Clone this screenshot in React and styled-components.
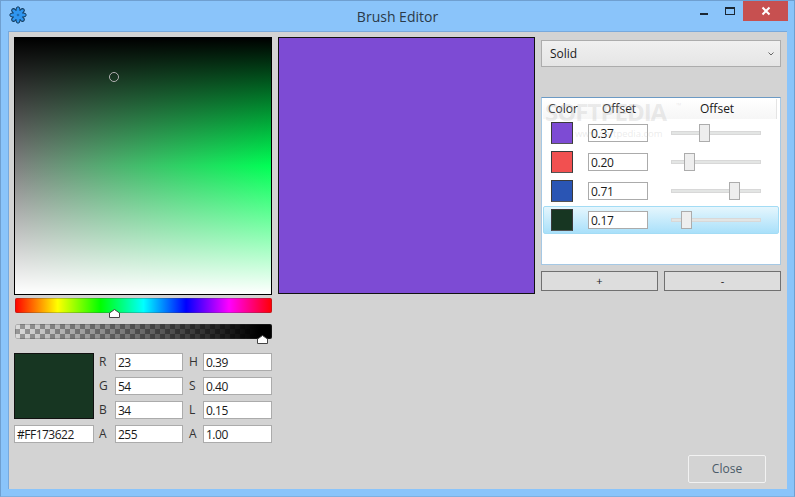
import { Fragment } from 'react';
import styled, { createGlobalStyle } from 'styled-components';

const Global = createGlobalStyle`
  html, body {
    margin: 0;
    padding: 0;
    background: #8ac4fa;
  }
  * {
    box-sizing: border-box;
  }
`;

const Frame = styled.div`
  width: 795px;
  height: 497px;
  display: flex;
  flex-direction: column;
  background: #8ac4fa;
  border: 1px solid #6f9fd0;
  border-bottom-color: #7fb0e0;
  font-family: 'Open Sans', 'Noto Sans', sans-serif;
  font-size: 12px;
  color: #1a1a1a;
  overflow: hidden;
`;

const TitleBar = styled.div`
  height: 30px;
  flex: none;
  position: relative;
  display: flex;
  align-items: flex-start;
  justify-content: space-between;
  padding-left: 8px;
`;

const AppIcon = styled.svg`
  width: 18px;
  height: 18px;
  margin-top: 5px;
`;

const Title = styled.div`
  position: absolute;
  left: 0;
  right: 0;
  top: 6px;
  text-align: center;
  font-size: 14px;
  line-height: 19px;
  color: #2b3a48;
`;

const WinButtons = styled.div`
  display: flex;
  align-items: flex-start;
  margin-right: 6px;
`;

const WinBtn = styled.div`
  width: ${(p) => (p.$close ? '45px' : '26px')};
  height: 20px;
  display: flex;
  align-items: center;
  justify-content: center;
  background: ${(p) => (p.$close ? '#c75050' : 'transparent')};
`;

const Client = styled.div`
  width: 779px;
  height: 458px;
  margin-left: 7px;
  flex: none;
  background: #d3d3d3;
  border-top: 1px solid #78a9dc;
  border-left: 1px solid #78a9dc;
  padding: 5px 6px 0 5px;
  position: relative;
  display: flex;
  gap: 6px;
`;

const LeftCol = styled.div`
  width: 258px;
  display: flex;
  flex-direction: column;
`;

const SvBox = styled.div`
  width: 258px;
  height: 258px;
  border: 1px solid #000;
  position: relative;
  background:
    linear-gradient(to bottom, #000 0%, rgba(0, 0, 0, 0) 50%, rgba(255, 255, 255, 0) 50%, #fff 100%),
    linear-gradient(to right, #808080, #00ff55);
`;

const SvCursor = styled.div`
  position: absolute;
  left: 94px;
  top: 34px;
  width: 10px;
  height: 10px;
  border-radius: 50%;
  border: 1px solid #b4b4b4;
  box-shadow: inset 0 0 0 0.5px rgba(0, 0, 0, 0.4);
`;

const SliderTrack = styled.div`
  width: 257px;
  height: 15px;
  margin-left: 1px;
  margin-top: ${(p) => p.$mt}px;
  position: relative;
  border-radius: 2px;
  background: ${(p) => p.$bg};
  box-shadow: inset 0 0 0 1px rgba(70, 70, 70, 0.3);
`;

const Thumb = styled.svg`
  position: absolute;
  left: ${(p) => p.$x}px;
  top: 11px;
  width: 11px;
  height: 9px;
`;

const ColorRow = styled.div`
  display: flex;
  margin-top: 14px;
`;

const BigSwatch = styled.div`
  width: 80px;
  height: 66px;
  background: #173622;
  border: 1px solid #111;
`;

const HexInput = styled.div`
  width: 80px;
  height: 18px;
  margin-top: 6px;
  background: #fff;
  border: 1px solid #ababab;
  padding-left: 2px;
  line-height: 17px;
  font-size: 12px;
  letter-spacing: -0.5px;
`;

const ValueGrid = styled.div`
  display: grid;
  grid-template-columns: 21px 68px 20px 69px;
  grid-auto-rows: 18px;
  row-gap: 6px;
`;

const ValueLabel = styled.div`
  padding-left: 5px;
  line-height: 17px;
  color: #333;
  font-size: 12px;
  ${(p) => p.$second && 'padding-left: 6px;'}
`;

const ValueInput = styled.div`
  background: #fff;
  border: 1px solid #ababab;
  padding-left: 2px;
  line-height: 17px;
  font-size: 12px;
  letter-spacing: -0.5px;
`;

const Preview = styled.div`
  width: 257px;
  height: 257px;
  background: #7d4bd4;
  border: 1px solid #111;
`;

const RightCol = styled.div`
  width: 240px;
  display: flex;
  flex-direction: column;
`;

const Combo = styled.div`
  height: 27px;
  margin-top: 3px;
  background: linear-gradient(to bottom, #f0f0f0, #e5e5e5);
  border: 1px solid #acacac;
  display: flex;
  align-items: center;
  justify-content: space-between;
  padding: 0 6px 0 8px;
  font-size: 12px;
`;

const ListPanel = styled.div`
  height: 168px;
  margin-top: 30px;
  background: #fff;
  border: 1px solid #a5c8e4;
  border-top-color: #6c9ac4;
  position: relative;
  padding: 1px;
  overflow: hidden;
`;

const ListHeader = styled.div`
  height: 20px;
  display: grid;
  grid-template-columns: 54px 98px 1fr;
  background: linear-gradient(to bottom, #fff, #f6f6f6);
  border-right: 1px solid #e4e4e4;
  margin-right: 2px;
  line-height: 20px;
  font-size: 12px;
`;

const HeaderCell = styled.div`
  padding-left: ${(p) => p.$pl}px;
`;

const Rows = styled.div`
  display: flex;
  flex-direction: column;
  gap: 1px;
`;

const Row = styled.div`
  height: 28px;
  display: flex;
  align-items: center;
  padding-left: 7px;
  border: 1px solid ${(p) => (p.$selected ? '#a3dcf5' : 'transparent')};
  border-radius: 2px;
  background: ${(p) => (p.$selected ? 'linear-gradient(to bottom, #e5f6fd, #a9e0fa)' : 'transparent')};
`;

const RowSwatch = styled.div`
  width: 22px;
  height: 22px;
  flex: none;
  background: ${(p) => p.$color};
  border: 1px solid #3a3a3a;
  border-bottom-color: #555;
`;

const OffsetInput = styled.div`
  width: 60px;
  height: 18px;
  flex: none;
  margin-left: 15px;
  background: #fff;
  border: 1px solid #ababab;
  padding-left: 2px;
  line-height: 17px;
  font-size: 12px;
  letter-spacing: -0.3px;
`;

const RowSlider = styled.div`
  width: 90px;
  height: 4px;
  flex: none;
  margin-left: 23px;
  background: #e3e5e4;
  border: 1px solid #d8d8d8;
  position: relative;
`;

const RowThumb = styled.div`
  position: absolute;
  top: -8px;
  width: 11px;
  height: 18px;
  background: #eeeeee;
  border: 1px solid #acacac;
`;

const ButtonRow = styled.div`
  display: flex;
  gap: 6px;
  margin-top: 6px;
`;

const SmallButton = styled.div`
  flex: 1;
  height: 20px;
  background: #dddddd;
  border: 1px solid #707070;
  text-align: center;
  line-height: 18px;
  font-size: 11px;
`;

const CloseButton = styled.div`
  position: absolute;
  right: 21px;
  bottom: 6px;
  width: 78px;
  height: 28px;
  border: 1px solid #f2f2f2;
  border-radius: 2px;
  text-align: center;
  line-height: 26px;
  font-size: 12px;
  color: #4a5a68;
`;

const Mark = styled.div`
  position: absolute;
  left: ${(p) => p.$x}px;
  top: ${(p) => p.$y}px;
  font-size: ${(p) => p.$size}px;
  font-weight: ${(p) => p.$weight};
  letter-spacing: ${(p) => p.$spacing || 0}px;
  line-height: 1;
  color: rgba(190, 190, 190, 0.3);
  pointer-events: none;
  white-space: nowrap;
`;

const stops = [
  { color: '#7d4bd4', value: '0.37', pos: 27 },
  { color: '#f25050', value: '0.20', pos: 12 },
  { color: '#2a55b4', value: '0.71', pos: 57 },
  { color: '#173622', value: '0.17', pos: 9, selected: true },
];

const hue =
  'linear-gradient(to right, #f00 0%, #ff0 16.6%, #0f0 33.3%, #0ff 50%, #00f 66.6%, #f0f 83.3%, #f00 100%)';
const checker =
  'linear-gradient(to right, rgba(0,0,0,0), #000 95%), repeating-conic-gradient(#989898 0% 25%, #dcdcdc 0% 50%) 0 0 / 10px 10px';

const ThumbIcon = ({ x }) => (
  <Thumb $x={x} viewBox="0 0 11 9">
    <path d="M.5 8.5V4L5.5.5l5 3.5v4.500z" fill="#fff" stroke="#444" />
  </Thumb>
);

const App = () => {
  const values = [
    ['R', '23', 'H', '0.39'],
    ['G', '54', 'S', '0.40'],
    ['B', '34', 'L', '0.15'],
    ['A', '255', 'A', '1.00'],
  ];

  return (
    <Frame>
      <Global />
      <TitleBar>
        <AppIcon viewBox="0 0 18 18">
          <g fill="#2f96f0" stroke="#123a5c" strokeWidth="1">
            {[0, 45, 90, 135, 180, 225, 270, 315].map((a) => (
              <ellipse key={a} cx="9" cy="3.4" rx="1.900" ry="2.600" transform={`rotate(${a} 9 9)`} />
            ))}
            <circle cx="9" cy="9" r="4.800" stroke="none" />
            <circle cx="9" cy="9" r="1.300" fill="#1f6db5" stroke="none" />
          </g>
        </AppIcon>
        <Title>Brush Editor</Title>
        <WinButtons>
          <WinBtn>
            <svg width="10" height="10" viewBox="0 0 10 10">
              <rect x="1" y="7" width="8" height="2" fill="#1b2733" />
            </svg>
          </WinBtn>
          <WinBtn>
            <svg width="12" height="10" viewBox="0 0 12 10">
              <rect x="1.500" y="1.500" width="9" height="7" fill="none" stroke="#1b2733" />
              <rect x="1" y="1" width="10" height="2" fill="#1b2733" />
            </svg>
          </WinBtn>
          <WinBtn $close>
            <svg width="10" height="10" viewBox="0 0 10 10">
              <path d="M1.500 1.500l7 7M8.500 1.500l-7 7" stroke="#fff" strokeWidth="2" />
            </svg>
          </WinBtn>
        </WinButtons>
      </TitleBar>
      <Client>
        <LeftCol>
          <SvBox>
            <SvCursor />
          </SvBox>
          <SliderTrack $mt={3} $bg={hue}>
            <ThumbIcon x={94} />
          </SliderTrack>
          <SliderTrack $mt={11} $bg={checker}>
            <ThumbIcon x={242} />
          </SliderTrack>
          <ColorRow>
            <div>
              <BigSwatch />
              <HexInput>#FF173622</HexInput>
            </div>
            <ValueGrid>
              {values.map((v) => (
                <Fragment key={v[0] + v[2]}>
                  <ValueLabel>{v[0]}</ValueLabel>
                  <ValueInput>{v[1]}</ValueInput>
                  <ValueLabel $second>{v[2]}</ValueLabel>
                  <ValueInput>{v[3]}</ValueInput>
                </Fragment>
              ))}
            </ValueGrid>
          </ColorRow>
        </LeftCol>
        <Preview />
        <RightCol>
          <Combo>
            Solid
            <svg width="6" height="4" viewBox="0 0 6 4">
              <path d="M.5.5l2.500 2.500L5.500.5" fill="none" stroke="#666" />
            </svg>
          </Combo>
          <ListPanel>
            <ListHeader>
              <HeaderCell $pl={5}>Color</HeaderCell>
              <HeaderCell $pl={5}>Offset</HeaderCell>
              <HeaderCell $pl={5}>Offset</HeaderCell>
            </ListHeader>
            <Rows>
              {stops.map((s) => (
                <Row key={s.value} $selected={s.selected}>
                  <RowSwatch $color={s.color} />
                  <OffsetInput>{s.value}</OffsetInput>
                  <RowSlider>
                    <RowThumb style={{ left: s.pos }} />
                  </RowSlider>
                </Row>
              ))}
            </Rows>
            <Mark $x={3} $y={2} $size={24} $weight={700} $spacing={-1}>SOFTPEDIA</Mark>
            <Mark $x={134} $y={4} $size={7} $weight={400}>™</Mark>
            <Mark $x={33} $y={31} $size={9.5} $weight={400}>www.softpedia.com</Mark>
          </ListPanel>
          <ButtonRow>
            <SmallButton>+</SmallButton>
            <SmallButton>-</SmallButton>
          </ButtonRow>
        </RightCol>
        <CloseButton>Close</CloseButton>
      </Client>
    </Frame>
  );
};

export default App;
